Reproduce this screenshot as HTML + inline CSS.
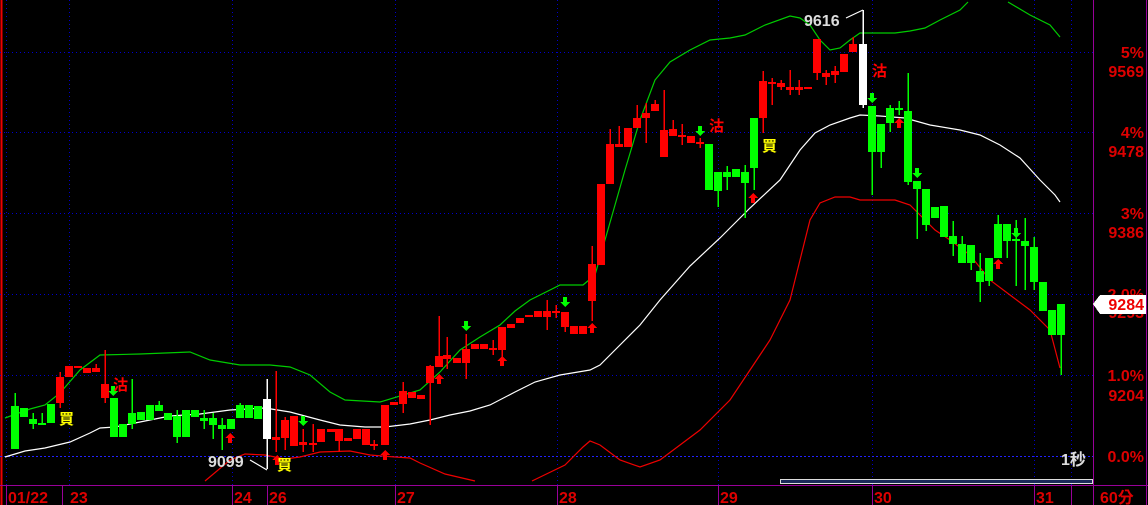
<!DOCTYPE html>
<html><head><meta charset="utf-8"><style>
html,body{margin:0;padding:0;background:#000;width:1148px;height:505px;overflow:hidden}
svg{display:block}
text{font-family:"Liberation Sans","Noto Sans CJK TC",sans-serif;font-weight:bold}
</style></head><body>
<svg width="1148" height="505" viewBox="0 0 1148 505" xmlns="http://www.w3.org/2000/svg" shape-rendering="crispEdges">
<rect width="1148" height="505" fill="#000"/>
<line x1="1.5" y1="0" x2="1.5" y2="505" stroke="#e00" stroke-width="2"/>
<g stroke="#00c" stroke-width="1" stroke-dasharray="1,3">
<line x1="0" y1="52.5" x2="1093" y2="52.5"/><line x1="0" y1="132.5" x2="1093" y2="132.5"/>
<line x1="0" y1="213.5" x2="1093" y2="213.5"/><line x1="0" y1="294.5" x2="1093" y2="294.5"/>
<line x1="0" y1="375.5" x2="1093" y2="375.5"/>
<line x1="6.5" y1="0" x2="6.5" y2="485"/><line x1="69.5" y1="0" x2="69.5" y2="485"/>
<line x1="232.5" y1="0" x2="232.5" y2="485"/><line x1="395.5" y1="0" x2="395.5" y2="485"/>
<line x1="557.5" y1="0" x2="557.5" y2="485"/><line x1="718.5" y1="0" x2="718.5" y2="485"/>
<line x1="872.5" y1="0" x2="872.5" y2="485"/><line x1="1034.5" y1="0" x2="1034.5" y2="485"/>
<line x1="1071.5" y1="0" x2="1071.5" y2="485"/>
</g>
<line x1="0" y1="456.5" x2="1093" y2="456.5" stroke="#22f" stroke-dasharray="2,2"/>
<!-- bands -->
<g fill="none" stroke-width="1.2" shape-rendering="auto">
<polyline stroke="#0c0" points="5,418 30,409 45,405 60,393 80,370 100,355 140,354 190,352 210,360 240,365 270,365 290,367 310,375 330,392 345,400 380,402 420,390 440,372 460,350 480,337 500,325 515,311 530,300 550,290 560,285 583,285 595,275 605,240 625,170 640,120 655,80 670,62 690,50 710,40 730,38 745,35 765,25 790,16 800,18 810,25 820,40 830,50 840,48 850,40 860,33 895,33 910,31 925,28 940,20 960,10 968,2"/>
<polyline stroke="#0c0" points="1008,2 1030,15 1050,25 1060,37"/>
<polyline stroke="#fff" points="5,457 25,451 45,448 70,442 90,433 100,428 115,427 130,424 150,420 170,416 200,414 230,410 265,408 290,412 320,420 340,425 365,427 385,427 410,424 430,420 450,415 470,411 490,405 515,392 535,382 560,375 590,370 600,365 615,350 640,325 660,300 690,266 720,238 750,208 780,180 800,150 815,133 830,125 850,118 860,115 880,116 905,118 930,125 960,130 980,135 1000,145 1020,158 1040,180 1055,195 1060,202"/>
<polyline stroke="#e00" points="205,481 230,460 245,454 265,455 285,459 300,457 320,452 350,451 370,455 395,457 410,458 420,463 445,474 475,481"/>
<polyline stroke="#e00" points="532,481 565,465 583,447 590,441 600,445 620,460 640,467 660,460 680,445 700,430 730,400 750,370 770,340 790,300 800,260 810,220 820,203 835,197 850,197 860,200 895,200 910,205 920,215 935,230 950,240 970,255 990,280 1010,295 1030,310 1050,330 1060,368"/>
<line x1="250" y1="460" x2="267" y2="470" stroke="#fff"/>
<line x1="846" y1="18" x2="863" y2="10" stroke="#fff"/>
</g>
<!-- wicks -->
<g stroke-width="1.5">
<g stroke="#0f0">
<line x1="15" y1="393" x2="15" y2="449"/><line x1="33" y1="413" x2="33" y2="429"/><line x1="42" y1="413" x2="42" y2="424"/>
<line x1="132" y1="379" x2="132" y2="429"/><line x1="159" y1="401" x2="159" y2="411"/><line x1="177" y1="410" x2="177" y2="443"/>
<line x1="204" y1="410" x2="204" y2="429"/><line x1="213" y1="413" x2="213" y2="439"/><line x1="222" y1="418" x2="222" y2="450"/>
<line x1="240" y1="403" x2="240" y2="418"/>
<line x1="718" y1="172" x2="718" y2="207"/><line x1="727" y1="166" x2="727" y2="190"/><line x1="745" y1="165" x2="745" y2="218"/><line x1="754" y1="118" x2="754" y2="190"/>
<line x1="872" y1="106" x2="872" y2="195"/><line x1="881" y1="124" x2="881" y2="168"/><line x1="890" y1="105" x2="890" y2="132"/><line x1="899" y1="101" x2="899" y2="115"/>
<line x1="908" y1="73" x2="908" y2="185"/><line x1="917" y1="181" x2="917" y2="239"/><line x1="926" y1="189" x2="926" y2="231"/>
<line x1="953" y1="221" x2="953" y2="256"/><line x1="962" y1="236" x2="962" y2="263"/><line x1="971" y1="245" x2="971" y2="270"/>
<line x1="980" y1="253" x2="980" y2="302"/><line x1="989" y1="258" x2="989" y2="286"/><line x1="998" y1="215" x2="998" y2="258"/>
<line x1="1007" y1="224" x2="1007" y2="258"/><line x1="1016" y1="220" x2="1016" y2="286"/><line x1="1025" y1="218" x2="1025" y2="290"/>
<line x1="1034" y1="237" x2="1034" y2="290"/><line x1="1061" y1="304" x2="1061" y2="375"/>
</g>
<g stroke="#f00">
<line x1="60" y1="372" x2="60" y2="408"/><line x1="96" y1="364" x2="96" y2="372"/><line x1="105" y1="350" x2="105" y2="403"/>
<line x1="276" y1="371" x2="276" y2="452"/><line x1="285" y1="417" x2="285" y2="450"/><line x1="303" y1="429" x2="303" y2="452"/>
<line x1="313" y1="424" x2="313" y2="452"/><line x1="339" y1="429" x2="339" y2="452"/><line x1="374" y1="440" x2="374" y2="450"/>
<line x1="403" y1="382" x2="403" y2="413"/><line x1="430" y1="365" x2="430" y2="425"/><line x1="439" y1="316" x2="439" y2="367"/>
<line x1="447" y1="337" x2="447" y2="369"/><line x1="466" y1="334" x2="466" y2="379"/><line x1="493" y1="340" x2="493" y2="355"/>
<line x1="502" y1="327" x2="502" y2="358"/><line x1="547" y1="300" x2="547" y2="330"/><line x1="556" y1="305" x2="556" y2="318"/>
<line x1="565" y1="312" x2="565" y2="332"/><line x1="592" y1="246" x2="592" y2="321"/><line x1="610" y1="129" x2="610" y2="184"/>
<line x1="619" y1="126" x2="619" y2="147"/><line x1="637" y1="105" x2="637" y2="128"/><line x1="646" y1="103" x2="646" y2="143"/>
<line x1="655" y1="100" x2="655" y2="111"/><line x1="664" y1="90" x2="664" y2="157"/><line x1="673" y1="120" x2="673" y2="136"/>
<line x1="682" y1="124" x2="682" y2="145"/><line x1="700" y1="138" x2="700" y2="148"/>
<line x1="763" y1="71" x2="763" y2="133"/><line x1="772" y1="78" x2="772" y2="105"/><line x1="781" y1="80" x2="781" y2="90"/>
<line x1="790" y1="70" x2="790" y2="95"/><line x1="799" y1="80" x2="799" y2="95"/><line x1="817" y1="39" x2="817" y2="80"/>
<line x1="826" y1="70" x2="826" y2="85"/><line x1="835" y1="66" x2="835" y2="83"/><line x1="853" y1="37" x2="853" y2="52"/>
</g>
<line x1="267" y1="379" x2="267" y2="469" stroke="#fff"/>
<line x1="863" y1="10" x2="863" y2="108" stroke="#fff"/>
</g>
<!-- bodies -->
<g fill="#0f0">
<rect x="11" y="406" width="8" height="43"/><rect x="20" y="408" width="8" height="9"/><rect x="29" y="419" width="8" height="5"/><rect x="38" y="423" width="8" height="2"/>
<rect x="47" y="404" width="8" height="19"/><rect x="110" y="398" width="8" height="39"/><rect x="119" y="424" width="8" height="13"/>
<rect x="128" y="413" width="8" height="11"/><rect x="137" y="412" width="8" height="8"/><rect x="146" y="405" width="8" height="15"/>
<rect x="155" y="405" width="8" height="6"/><rect x="164" y="413" width="8" height="7"/><rect x="173" y="416" width="8" height="21"/>
<rect x="182" y="410" width="8" height="27"/><rect x="191" y="410" width="8" height="7"/><rect x="200" y="418" width="8" height="3"/>
<rect x="209" y="418" width="8" height="7"/><rect x="218" y="425" width="8" height="4"/><rect x="227" y="419" width="8" height="10"/>
<rect x="236" y="405" width="8" height="13"/><rect x="245" y="405" width="8" height="13"/><rect x="254" y="406" width="8" height="13"/>
<rect x="705" y="144" width="8" height="46"/><rect x="714" y="172" width="8" height="19"/><rect x="723" y="172" width="8" height="5"/>
<rect x="732" y="169" width="8" height="8"/><rect x="741" y="172" width="8" height="11"/><rect x="750" y="118" width="8" height="50"/>
<rect x="868" y="106" width="8" height="46"/><rect x="877" y="124" width="8" height="28"/><rect x="886" y="108" width="8" height="15"/>
<rect x="895" y="108" width="8" height="2"/><rect x="904" y="111" width="8" height="71"/><rect x="913" y="181" width="8" height="8"/>
<rect x="922" y="189" width="8" height="36"/><rect x="931" y="207" width="8" height="11"/><rect x="940" y="206" width="8" height="31"/>
<rect x="949" y="236" width="8" height="8"/><rect x="958" y="244" width="8" height="19"/><rect x="967" y="245" width="8" height="18"/>
<rect x="976" y="271" width="8" height="11"/><rect x="985" y="258" width="8" height="23"/><rect x="994" y="224" width="8" height="34"/>
<rect x="1003" y="224" width="8" height="17"/><rect x="1012" y="239" width="8" height="2"/><rect x="1021" y="241" width="8" height="5"/>
<rect x="1030" y="247" width="8" height="35"/><rect x="1039" y="282" width="8" height="29"/><rect x="1048" y="310" width="8" height="25"/>
<rect x="1057" y="304" width="8" height="31"/>
</g>
<g fill="#f00">
<rect x="56" y="377" width="8" height="26"/><rect x="65" y="366" width="8" height="11"/><rect x="74" y="366" width="8" height="2"/>
<rect x="83" y="368" width="8" height="5"/><rect x="92" y="368" width="8" height="4"/><rect x="101" y="384" width="8" height="14"/>
<rect x="272" y="437" width="8" height="3"/><rect x="281" y="420" width="8" height="18"/><rect x="290" y="416" width="8" height="30"/>
<rect x="299" y="442" width="8" height="3"/><rect x="309" y="443" width="8" height="2"/><rect x="317" y="429" width="8" height="13"/>
<rect x="327" y="429" width="8" height="3"/><rect x="335" y="429" width="8" height="12"/><rect x="344" y="438" width="8" height="3"/>
<rect x="353" y="429" width="8" height="10"/><rect x="362" y="429" width="8" height="16"/><rect x="370" y="444" width="8" height="2"/>
<rect x="381" y="405" width="8" height="40"/><rect x="390" y="402" width="8" height="3"/><rect x="399" y="391" width="8" height="13"/>
<rect x="408" y="392" width="8" height="6"/><rect x="417" y="395" width="8" height="4"/><rect x="426" y="366" width="8" height="17"/>
<rect x="435" y="356" width="8" height="11"/><rect x="443" y="355" width="8" height="4"/><rect x="453" y="358" width="8" height="5"/>
<rect x="462" y="349" width="8" height="14"/><rect x="471" y="344" width="8" height="5"/><rect x="480" y="344" width="8" height="5"/>
<rect x="489" y="348" width="8" height="2"/><rect x="498" y="327" width="8" height="23"/><rect x="507" y="324" width="8" height="4"/>
<rect x="516" y="318" width="8" height="5"/><rect x="525" y="315" width="8" height="2"/><rect x="534" y="311" width="8" height="6"/>
<rect x="543" y="311" width="8" height="6"/><rect x="552" y="311" width="8" height="2"/><rect x="561" y="312" width="8" height="15"/>
<rect x="570" y="326" width="8" height="8"/><rect x="579" y="326" width="8" height="8"/><rect x="588" y="264" width="8" height="37"/>
<rect x="597" y="184" width="8" height="81"/><rect x="606" y="144" width="8" height="40"/><rect x="615" y="144" width="8" height="3"/>
<rect x="624" y="128" width="8" height="19"/><rect x="633" y="118" width="8" height="10"/><rect x="642" y="113" width="8" height="5"/>
<rect x="651" y="104" width="8" height="7"/><rect x="660" y="130" width="8" height="27"/><rect x="669" y="129" width="8" height="7"/>
<rect x="678" y="135" width="8" height="2"/><rect x="687" y="136" width="8" height="7"/><rect x="696" y="142" width="8" height="2"/>
<rect x="759" y="81" width="8" height="37"/><rect x="768" y="82" width="8" height="2"/><rect x="777" y="83" width="8" height="4"/>
<rect x="786" y="87" width="8" height="3"/><rect x="795" y="87" width="8" height="3"/><rect x="804" y="87" width="8" height="2"/>
<rect x="813" y="39" width="8" height="34"/><rect x="822" y="73" width="8" height="4"/><rect x="831" y="71" width="8" height="4"/>
<rect x="840" y="54" width="8" height="18"/><rect x="849" y="44" width="8" height="8"/>
</g>
<rect x="263" y="399" width="8" height="40" fill="#fff"/>
<rect x="859" y="44" width="8" height="61" fill="#fff"/>
<!-- arrows -->
<g fill="#0f0">
<path d="M111,386h4v5h3l-5,5l-5,-5h3z"/><path d="M301,416h4v5h3l-5,5l-5,-5h3z"/><path d="M464,321h4v5h3l-5,5l-5,-5h3z"/>
<path d="M563,297h4v5h3l-5,5l-5,-5h3z"/><path d="M698,126h4v5h3l-5,5l-5,-5h3z"/><path d="M870,93h4v5h3l-5,5l-5,-5h3z"/>
<path d="M915,168h4v5h3l-5,5l-5,-5h3z"/><path d="M1014,228h4v5h3l-5,5l-5,-5h3z"/>
</g>
<g fill="#f00">
<path d="M230,433l5,5h-3v5h-4v-5h-3z"/><path d="M277,455l5,5h-3v5h-4v-5h-3z"/><path d="M385,450l5,5h-3v5h-4v-5h-3z"/>
<path d="M439,374l5,5h-3v5h-4v-5h-3z"/><path d="M502,356l5,5h-3v5h-4v-5h-3z"/><path d="M592,323l5,5h-3v5h-4v-5h-3z"/>
<path d="M753,193l5,5h-3v5h-4v-5h-3z"/><path d="M899,118l5,5h-3v5h-4v-5h-3z"/><path d="M998,259l5,5h-3v5h-4v-5h-3z"/>
</g>
<g font-size="15">
<text x="59" y="424" fill="#ff0">買</text><text x="277" y="470" fill="#ff0">買</text><text x="762" y="151" fill="#ff0">買</text>
<text x="113" y="390" fill="#f00">沽</text><text x="709" y="131" fill="#f00">沽</text><text x="872" y="76" fill="#f00">沽</text>
<text x="208" y="467" fill="#ddd" font-size="16">9099</text><text x="804" y="26" fill="#ddd" font-size="16">9616</text>
<text x="1061" y="465" fill="#ddd" font-size="16">1秒</text>
</g>
<!-- scroll bar -->
<rect x="780.5" y="479.5" width="312" height="4" fill="#1a2a5a" stroke="#ddd"/>
<!-- axes -->
<line x1="1093.5" y1="0" x2="1093.5" y2="505" stroke="#909"/>
<line x1="1146.5" y1="0" x2="1146.5" y2="505" stroke="#909"/>
<line x1="0" y1="485.5" x2="1148" y2="485.5" stroke="#909"/>
<g stroke="#909">
<line x1="6.5" y1="485" x2="6.5" y2="505"/><line x1="62.5" y1="485" x2="62.5" y2="505"/><line x1="232.5" y1="485" x2="232.5" y2="505"/>
<line x1="267.5" y1="485" x2="267.5" y2="505"/><line x1="395.5" y1="485" x2="395.5" y2="505"/><line x1="557.5" y1="485" x2="557.5" y2="505"/>
<line x1="718.5" y1="485" x2="718.5" y2="505"/><line x1="872.5" y1="485" x2="872.5" y2="505"/><line x1="1034.5" y1="485" x2="1034.5" y2="505"/>
<line x1="1071.5" y1="485" x2="1071.5" y2="505"/>
</g>
<g fill="#d00" font-size="16">
<text x="8" y="503">01/22</text><text x="70" y="503">23</text><text x="234" y="503">24</text><text x="269" y="503">26</text>
<text x="397" y="503">27</text><text x="559" y="503">28</text><text x="720" y="503">29</text><text x="874" y="503">30</text>
<text x="1036" y="503">31</text><text x="1100" y="503">60分</text>
</g>
<g fill="#d00" font-size="16" text-anchor="end">
<text x="1144" y="58">5%</text><text x="1144" y="77">9569</text>
<text x="1144" y="138">4%</text><text x="1144" y="157">9478</text>
<text x="1144" y="219">3%</text><text x="1144" y="238">9386</text>
<text x="1144" y="300">2.0%</text><text x="1144" y="318">9293</text>
<text x="1144" y="381">1.0%</text><text x="1144" y="401">9204</text>
<text x="1144" y="462">0.0%</text>
</g>
<path d="M1093,304l7,-9h46v19h-46z" fill="#fff"/>
<text x="1144" y="310" fill="#e00" font-size="16" text-anchor="end">9284</text>
</svg>
</body></html>
